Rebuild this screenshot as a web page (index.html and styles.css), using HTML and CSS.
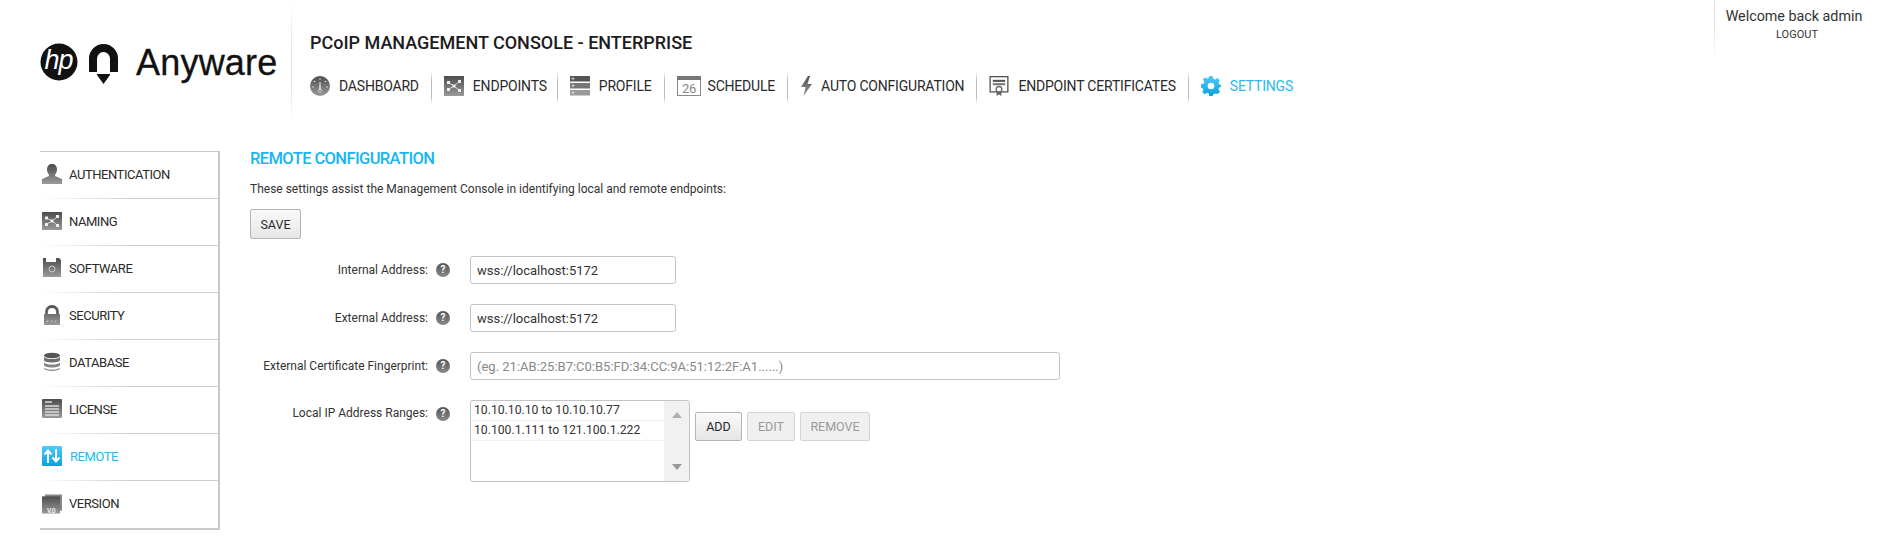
FILE: index.html
```html
<!DOCTYPE html>
<html lang="en">
<head>
<meta charset="utf-8">
<title>PCoIP Management Console</title>
<link rel="stylesheet" href="styles.css">
</head>
<body>
<svg class="defs" width="0" height="0" aria-hidden="true">
  <defs>
    <linearGradient id="grey" x1="0" y1="0" x2="0" y2="1"><stop offset="0" stop-color="#4d4d4d"/><stop offset="1" stop-color="#9a9a9a"/></linearGradient>
    <linearGradient id="blue" x1="0" y1="0" x2="0" y2="1"><stop offset="0" stop-color="#4fcbf8"/><stop offset="1" stop-color="#0a9fe0"/></linearGradient>
  </defs>
</svg>
<header class="header">
  <div class="logo">
    <svg class="hp" viewBox="0 0 38 38" width="38" height="38"><circle cx="19" cy="19" r="18.5" fill="#111"/><text x="18.500" y="26" text-anchor="middle" class="hp-text">hp</text></svg>
    <svg class="pin" viewBox="0 0 29 40" width="29" height="40"><path d="M0 28V14.500a14.500 14.500 0 0 1 29 0V28h-8V14.500a6.500 6.500 0 0 0-13 0V28z" fill="#111"/><path d="M8 30h13v1l-6.500 9L8 31z" fill="#111"/></svg>
    <span class="wordmark">Anyware</span>
  </div>
  <div class="head-main">
    <h1 class="title">PCoIP MANAGEMENT CONSOLE - ENTERPRISE</h1>
    <nav class="nav">
      <a class="nav-item nav-first"><svg class="ico-20" viewBox="0 0 20 20"><circle cx="10" cy="10" r="10" fill="url(#grey)"/><path d="M9.500 6h1l.5 8H9z" fill="#ddd"/><circle cx="10" cy="14.500" r="1.600" fill="none" stroke="#ddd" stroke-width=".8"/><circle cx="10" cy="3" r=".8" fill="#ddd"/><circle cx="4.500" cy="5.500" r=".8" fill="#ddd"/><circle cx="15.500" cy="5.500" r=".8" fill="#ddd"/><circle cx="3" cy="11" r=".8" fill="#ddd"/><circle cx="17" cy="11" r=".8" fill="#ddd"/></svg><span>DASHBOARD</span></a>
      <a class="nav-item nav-second"><svg class="ico-20" viewBox="0 0 20 20"><rect width="20" height="20" fill="url(#grey)"/><path d="M5 13l5-3 5-4M10 10l5 4M5 7l5 3" stroke="#ddd" stroke-width="1"/><g fill="#eee"><rect x="3" y="5" width="3" height="3"/><rect x="8.500" y="8.500" width="3" height="3"/><rect x="14" y="4" width="3" height="3"/><rect x="3" y="12" width="3" height="3"/><rect x="14" y="13" width="3" height="3"/></g></svg><span>ENDPOINTS</span></a>
      <a class="nav-item"><svg class="ico-20" viewBox="0 0 20 20"><rect width="20" height="5.500" fill="#555"/><rect y="7" width="20" height="5.500" fill="#777"/><rect y="14" width="20" height="5.500" fill="#999"/><path d="M1.500 2.700h3M3 1.200v3M1.500 9.700h3M3 8.200v3M1.500 16.700h3M3 15.200v3" stroke="#eee" stroke-width=".7"/></svg><span>PROFILE</span></a>
      <a class="nav-item nav-tight"><svg class="ico-cal" viewBox="0 0 24 20"><rect x=".5" y=".5" width="23" height="19" fill="#fff" stroke="#8a8a8a"/><rect width="24" height="4" fill="#777"/><text x="12" y="16.500" text-anchor="middle" class="cal-text">26</text></svg><span>SCHEDULE</span></a>
      <a class="nav-item nav-bolt"><svg class="ico-bolt" viewBox="0 0 13 20"><path d="M8 0L1 11h4.500L3.500 20 12 8H7.500L10 0z" fill="url(#grey)"/></svg><span>AUTO CONFIGURATION</span></a>
      <a class="nav-item"><svg class="ico-20" viewBox="0 0 20 21"><rect x=".7" y=".7" width="18.600" height="16" fill="#fff" stroke="#555" stroke-width="1.400"/><rect x="3.500" y="4" width="13" height="2.200" fill="#555"/><rect x="3.500" y="7.500" width="13" height="2.200" fill="#777"/><circle cx="10" cy="14" r="3" fill="#fff" stroke="#666" stroke-width="1.400"/><path d="M7.500 16v5l2.500-1.500 2.500 1.500v-5z" fill="#666"/></svg><span>ENDPOINT CERTIFICATES</span></a>
      <a class="nav-item nav-active"><svg class="ico-20" viewBox="0 0 24 24"><path d="M10 0h4l.7 3.200 2.300 1 2.800-1.800 2.800 2.800L21 8l1 2.300 3 .7v2l-3 .7-1 2.300 1.800 2.800-2.800 2.800L17 21l-2.300 1-.7 2h-4l-.7-3-2.300-1-2.800 1.800-2.800-2.800L3 17l-1-2.300-2-.7v-4l3-.7 1-2.300-1.800-2.800 2.800-2.800L7 3.200l2.300-1zM12 8a4 4 0 1 0 0 8 4 4 0 0 0 0-8z" fill="url(#blue)" fill-rule="evenodd"/></svg><span>SETTINGS</span></a>
    </nav>
  </div>
  <div class="user">
    <div class="welcome">Welcome back admin</div>
    <a class="logout">LOGOUT</a>
  </div>
</header>

<main class="main">
  <aside class="side">
    <a class="side-item"><svg class="side-ico" viewBox="0 0 20 20"><path d="M10 0c3 0 5 2 5 5.500 0 2.500-1 4-2 5v1.500l7 3v5H0v-5l7-3v-1.500c-1-1-2-2.500-2-5C5 2 7 0 10 0z" fill="url(#grey)"/></svg><span>AUTHENTICATION</span></a>
    <a class="side-item"><svg class="side-ico" viewBox="0 0 20 20"><rect y="1" width="20" height="18" fill="url(#grey)"/><path d="M5 13l5-3 5-4M10 10l5 4M5 7l5 3" stroke="#ddd"/><g fill="#eee"><rect x="3" y="5.500" width="3" height="3"/><rect x="8.500" y="8.500" width="3" height="3"/><rect x="14" y="4" width="3" height="3"/><rect x="3" y="12" width="3" height="3"/><rect x="14" y="13" width="3" height="3"/></g></svg><span>NAMING</span></a>
    <a class="side-item"><svg class="side-ico" viewBox="0 0 20 20"><path d="M1 0h3v4h10V0h3l2 2v17H1z" fill="url(#grey)"/><circle cx="10" cy="11" r="3" fill="none" stroke="#ccc"/></svg><span>SOFTWARE</span></a>
    <a class="side-item"><svg class="side-ico" viewBox="0 0 20 20"><path d="M3 9V7a7 7 0 0 1 14 0v2h1v11H2V9zm3 0h8V7a4 4 0 0 0-8 0z" fill="url(#grey)" fill-rule="evenodd"/><path d="M5 17l1-1.500M9 17l1-1.500M13 17l1-1.500" stroke="#ddd"/></svg><span>SECURITY</span></a>
    <a class="side-item"><svg class="side-ico" viewBox="0 0 20 20"><ellipse cx="10" cy="3.500" rx="8" ry="2.800" fill="#555"/><path d="M2 5v3c0 1.500 3.500 2.500 8 2.500s8-1 8-2.500V5c-1.500 1.500-4 2-8 2s-6.500-.5-8-2z" fill="#6f6f6f"/><path d="M2 10.500V13c0 1.500 3.500 2.500 8 2.500s8-1 8-2.500v-2.500c-1.500 1.500-4 2-8 2s-6.500-.5-8-2z" fill="#848484"/><path d="M2 15.500v1c0 1.500 3.500 2.500 8 2.500s8-1 8-2.500v-1c-1.500 1.500-4 2-8 2s-6.500-.5-8-2z" fill="#999"/></svg><span>DATABASE</span></a>
    <a class="side-item"><svg class="side-ico" viewBox="0 0 20 20"><rect width="20" height="19" rx="1" fill="url(#grey)"/><path d="M3 3h7M3 7h14M3 10h14M3 13h14M3 16h14" stroke="#ddd" stroke-width="1.300"/></svg><span>LICENSE</span></a>
    <a class="side-item side-active"><svg class="side-ico" viewBox="0 0 20 20"><rect width="20" height="20" rx="1" fill="url(#blue)"/><path d="M6 17V5M2.500 8.500L6 4.500l3.500 4M14 3v12M10.500 11.500l3.500 4 3.500-4" stroke="#fff" stroke-width="2" fill="none"/></svg><span>REMOTE</span></a>
    <a class="side-item"><svg class="side-ico" viewBox="0 0 21 20"><rect x="3" y="0" width="18" height="17" fill="#888"/><rect y="2" width="19" height="18" fill="url(#grey)"/><text x="9.500" y="19" text-anchor="middle" class="ver-text">V.0</text></svg><span>VERSION</span></a>
  </aside>

  <section class="content">
    <h2 class="heading">REMOTE CONFIGURATION</h2>
    <p class="desc">These settings assist the Management Console in identifying local and remote endpoints:</p>
    <button class="btn btn-save" type="button">SAVE</button>
    <div class="form">
      <label class="label">Internal Address:</label>
      <span class="help">?</span>
      <input class="input input-short" type="text" value="wss://localhost:5172">

      <label class="label">External Address:</label>
      <span class="help">?</span>
      <input class="input input-short" type="text" value="wss://localhost:5172">

      <label class="label">External Certificate Fingerprint:</label>
      <span class="help">?</span>
      <input class="input input-long" type="text" placeholder="(eg. 21:AB:25:B7:C0:B5:FD:34:CC:9A:51:12:2F:A1......)">

      <label class="label label-top">Local IP Address Ranges:</label>
      <span class="help help-top">?</span>
      <div class="ranges">
        <div class="listbox">
          <ul class="list">
            <li class="list-row">10.10.10.10 to 10.10.10.77</li>
            <li class="list-row">10.100.1.111 to 121.100.1.222</li>
          </ul>
          <div class="scroll">
            <span class="arrow arrow-up"></span>
            <span class="arrow arrow-down"></span>
          </div>
        </div>
        <div class="range-btns">
          <button class="btn btn-add" type="button">ADD</button>
          <button class="btn btn-off btn-edit" type="button">EDIT</button>
          <button class="btn btn-off btn-remove" type="button">REMOVE</button>
        </div>
      </div>
    </div>
  </section>
</main>
</body>
</html>
```

FILE: styles.css
```css
* { box-sizing: border-box; }
html, body { margin: 0; padding: 0; background: #fff; }
body {
  font-family: Roboto, "Liberation Sans", sans-serif;
  color: #222;
  width: 1881px;
  height: 547px;
  overflow: hidden;
}
.defs { position: absolute; }
a { color: inherit; text-decoration: none; }

/* header */
.header { display: flex; height: 151px; align-items: flex-start; }
.logo {
  width: 292px;
  height: 122px;
  padding: 43px 0 0 40px;
  display: flex;
  align-items: flex-start;
  border-right: 1px solid;
  border-image: linear-gradient(#fff, #e2e2e2 40%, #e2e2e2 70%, #fff) 1;
  flex: none;
}
.hp { flex: none; }
.hp-text { font: italic 400 27px "Liberation Sans", sans-serif; fill: #fff; letter-spacing: -1px; }
.pin { margin: 1px 0 0 11px; flex: none; }
.wordmark {
  margin: 2px 0 0 18px;
  font: 400 36px/36px "Liberation Sans", sans-serif;
  letter-spacing: .2px;
  color: #111;
  -webkit-text-stroke: .3px #111;
}
.head-main { padding: 0 0 0 18px; flex: none; }
.title {
  margin: 32px 0 0;
  font-size: 18px;
  line-height: 22px;
  font-weight: 500;
  color: #1c1c1c;
}
.nav { display: flex; margin-top: 18px; height: 31px; align-items: center; }
.nav-item {
  display: flex;
  align-items: center;
  gap: 9px;
  height: 31px;
  padding: 0 12px 4px;
  font-size: 14px;
  letter-spacing: -.2px;
  color: #2a2a2a;
  border-left: 1px solid;
  border-image: linear-gradient(#fff, #bbb 30%, #bbb 80%, #fff) 1;
}
.nav-first { padding-left: 0; border-left: 0; }
.nav-second { padding-right: 10px; }
.nav-tight { gap: 7px; }
.nav-bolt { gap: 8px; }
.nav-active { color: #2bb9f0; }
.ico-20 { width: 20px; height: 20px; flex: none; }
.ico-cal { width: 24px; height: 20px; flex: none; }
.ico-bolt { width: 13px; height: 20px; flex: none; }
.cal-text { font: 400 13px Roboto, sans-serif; fill: #888; }
.user {
  margin-left: auto;
  width: 167px;
  height: 60px;
  padding: 7px 8px 0 0;
  text-align: center;
  border-left: 1px solid;
  border-image: linear-gradient(#e4e4e4, #e4e4e4 50%, #fff) 1;
}
.welcome { font-size: 14.300px; line-height: 18px; color: #333; }
.logout { display: block; font-size: 11px; line-height: 14px; margin: 3px 0 0 6px; color: #333; }

/* sidebar */
.main { display: flex; align-items: flex-start; padding-left: 40px; }
.side {
  width: 180px;
  border-top: 1px solid #c8c8c8;
  border-right: 2px solid #c8c8c8;
  border-bottom: 2px solid #c8c8c8;
  flex: none;
}
.side-item {
  display: flex;
  align-items: center;
  gap: 7px;
  height: 47px;
  padding: 0 0 2px 2px;
  font-size: 13px;
  letter-spacing: -.45px;
  color: #2a2a2a;
  border-bottom: 1px solid;
  border-image: linear-gradient(90deg, #fff, #cfcfcf 50%, #cfcfcf) 1;
}
.side-item:last-child { border-bottom: 0; }
.side-ico { width: 20px; height: 20px; flex: none; }
.side-active { color: #2bb9f0; gap: 8px; }
.ver-text { font: 700 7px Roboto, sans-serif; fill: #eee; }

/* content */
.content { padding-left: 30px; flex: none; }
.heading { margin: -2px 0 0; font-size: 16.500px; line-height: 20px; font-weight: 500; letter-spacing: -.6px; color: #14b6f5; }
.desc { margin: 12px 0 0; font-size: 12px; line-height: 16px; color: #333; }
.btn {
  display: block;
  font-family: inherit;
  font-size: 12.500px;
  color: #2a2a2a;
  border: 1px solid #b5b5b5;
  border-radius: 2px;
  background: linear-gradient(#fafafa, #e6e6e6);
  padding: 0;
  height: 29px;
}
.btn-save { width: 51px; height: 30px; margin-top: 12px; }
.form {
  display: grid;
  grid-template-columns: 178px 42px auto;
  row-gap: 20px;
  align-items: center;
  margin-top: 17px;
}
.label { font-size: 12px; text-align: right; color: #333; }
.label-top { align-self: start; margin-top: 6px; }
.help {
  margin-left: 8px;
  width: 14px;
  height: 14px;
  border-radius: 50%;
  background: linear-gradient(#555, #8a8a8a);
  color: #fff;
  font-size: 10px;
  font-weight: 700;
  line-height: 14px;
  text-align: center;
}
.help-top { align-self: start; margin-top: 7px; }
.input {
  display: block;
  height: 28px;
  padding: 0 6px;
  font-family: inherit;
  font-size: 13px;
  color: #333;
  border: 1px solid #c4c4c4;
  border-radius: 3px;
  background: #fff;
  outline: 0;
}
.input::placeholder { color: #888; opacity: 1; }
.input-short { width: 206px; }
.input-long { width: 590px; }
.ranges { display: flex; align-items: flex-start; }
.listbox {
  display: flex;
  width: 220px;
  height: 82px;
  border: 1px solid #c4c4c4;
  border-radius: 3px;
  overflow: hidden;
}
.list { flex: 1; margin: 0; padding: 0; list-style: none; }
.list-row {
  height: 20px;
  padding-left: 3px;
  font-size: 12.200px;
  line-height: 19px;
  color: #333;
  border-bottom: 1px solid #f0f0f0;
}
.scroll {
  width: 25px;
  background: #f1f1f1;
  display: flex;
  flex-direction: column;
  justify-content: space-between;
  align-items: center;
  padding: 11px 0;
}
.arrow { width: 0; height: 0; border-left: 5px solid transparent; border-right: 5px solid transparent; }
.arrow-up { border-bottom: 6px solid #b0b0b0; }
.arrow-down { border-top: 6px solid #999; }
.range-btns { display: flex; gap: 5px; margin: 12px 0 0 5px; }
.btn-add { width: 47px; }
.btn-edit { width: 48px; }
.btn-remove { width: 70px; }
.btn-off { color: #9a9a9a; border-color: #d4d4d4; background: #f0f0f0; }
```
